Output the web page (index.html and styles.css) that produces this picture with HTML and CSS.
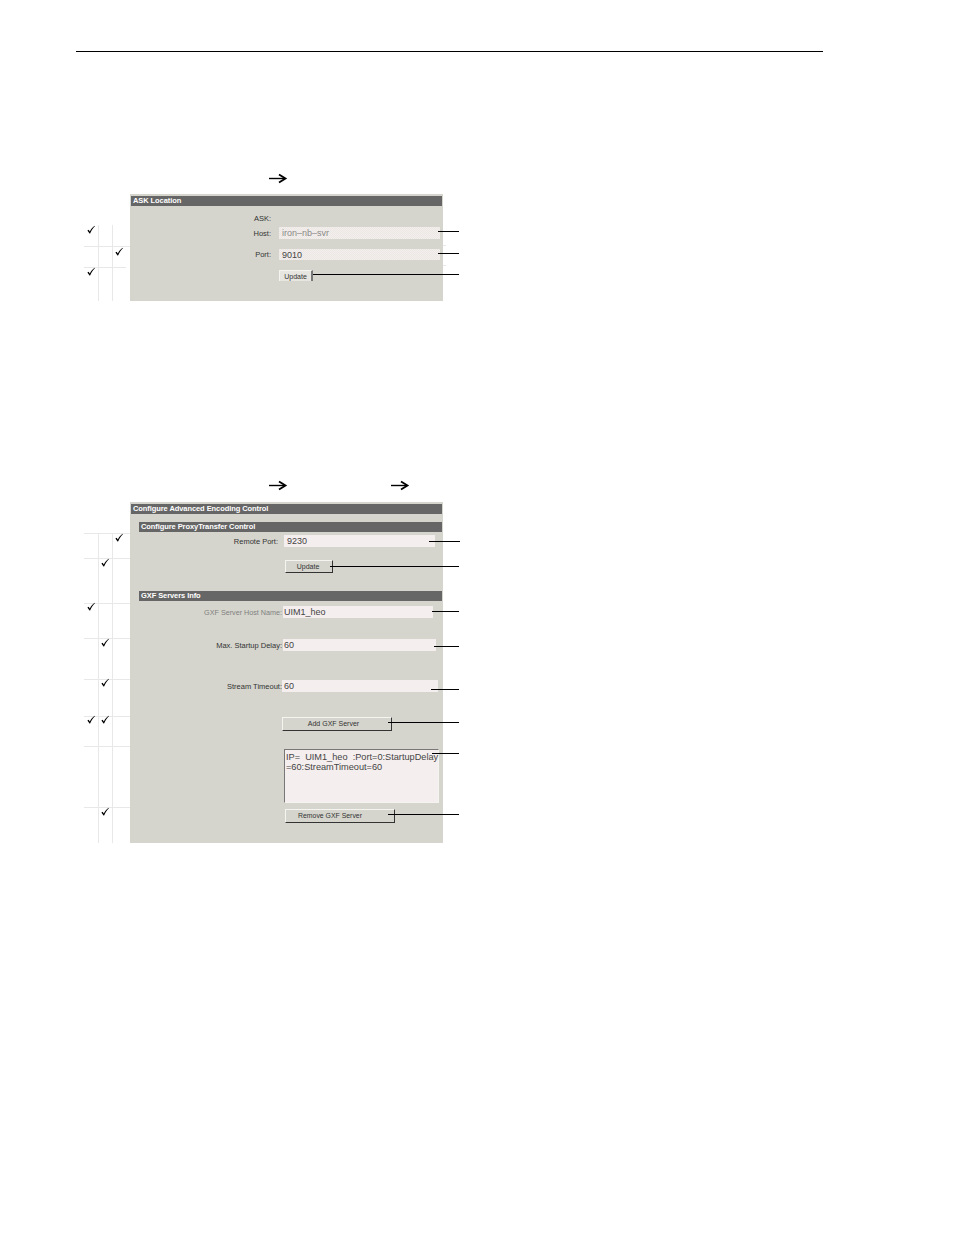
FILE: index.html
```html
<!DOCTYPE html>
<html lang="en">
<head>
    <meta charset="UTF-8">
    <title>ASK Location and Advanced Encoding Control</title>
    <link rel="stylesheet" href="styles.css">
</head>
<body>
<div class="page">
    <div class="top-rule"></div>

    <!-- ASK Location panel -->
    <div class="panel panel-ask">
        <div class="title-bar">ASK Location</div>
        <div class="row row-ask-head"><span class="label">ASK:</span></div>
        <div class="row row-host">
            <span class="label">Host:</span>
            <div class="field dither field-disabled">iron&#8211;nb&#8211;svr</div>
        </div>
        <div class="row row-port">
            <span class="label">Port:</span>
            <div class="field dither">9010</div>
        </div>
        <div class="row row-update">
            <span class="label"></span>
            <div class="btn btn-light">Update</div>
        </div>
    </div>

    <!-- Advanced Encoding panel -->
    <div class="panel panel-encoding">
        <div class="title-bar">Configure Advanced Encoding Control</div>

        <div class="sub-bar sub-proxy">Configure ProxyTransfer Control</div>
        <div class="row row-remote">
            <span class="label">Remote Port:</span>
            <div class="field">9230</div>
        </div>
        <div class="row row-proxy-update">
            <span class="label"></span>
            <div class="btn">Update</div>
        </div>

        <div class="sub-bar sub-gxf">GXF Servers Info</div>
        <div class="row row-gxf-host">
            <span class="label label-disabled">GXF Server Host Name:</span>
            <div class="field">UIM1_heo</div>
        </div>
        <div class="row row-startup">
            <span class="label">Max. Startup Delay:</span>
            <div class="field">60</div>
        </div>
        <div class="row row-timeout">
            <span class="label">Stream Timeout:</span>
            <div class="field">60</div>
        </div>
        <div class="row row-add">
            <span class="label"></span>
            <div class="btn">Add GXF Server</div>
        </div>
        <div class="row row-list">
            <span class="label"></span>
            <div class="server-list">IP=&nbsp; UIM1_heo &nbsp;:Port=0:StartupDelay<br>=60:StreamTimeout=60</div>
        </div>
        <div class="row row-remove">
            <span class="label"></span>
            <div class="btn">Remove GXF Server</div>
        </div>
    </div>

    <!-- Table rules, check marks, arrows and callout lines laid over the page -->
    <svg class="overlay" width="954" height="1235" viewBox="0 0 954 1235">
        <defs>
            <path id="check" d="M-3.6 0.4 L-2.4 -0.3 L-1.2 1.6 C0 -0.8 1.6 -2.8 3.6 -4.2 L3.9 -3.8 C2 -2 0.2 0.4 -0.9 3.6 L-1.5 3.6 Z" fill="#000"/>
            <g id="arrow" fill="none" stroke="#000">
                <path d="M0 0 H15" stroke-width="1.4"/>
                <path d="M10 -4 L16.5 0 L10 4" stroke-width="1.8"/>
            </g>
        </defs>

        <g stroke="#e8e8e8" stroke-width="1">
            <path d="M98.5 225 V301 M112.5 225 V301 M84 246.5 H130 M84 267.5 H126 M443 245.5 H446 M443 265.5 H446"/>
            <path d="M98.5 533 V843 M112.5 533 V843"/>
            <path d="M84 533.5 H130 M84 558.5 H130 M84 603.5 H130 M84 638.5 H130 M84 679.5 H130 M84 716.5 H130 M84 746.5 H130 M84 807.5 H130"/>
        </g>

        <use href="#check" x="91" y="230"/>
        <use href="#check" x="119" y="252"/>
        <use href="#check" x="91" y="272"/>
        <use href="#check" x="119" y="538"/>
        <use href="#check" x="105" y="563"/>
        <use href="#check" x="91" y="607"/>
        <use href="#check" x="105" y="643"/>
        <use href="#check" x="105" y="683"/>
        <use href="#check" x="91" y="720"/>
        <use href="#check" x="105" y="720"/>
        <use href="#check" x="105" y="812"/>

        <use href="#arrow" x="269" y="178.5"/>
        <use href="#arrow" x="269" y="485.5"/>
        <use href="#arrow" x="391" y="485.5"/>

        <g stroke="#000" stroke-width="1">
            <path d="M438 231.5 H459 M438 253.5 H459 M313 274.5 H459"/>
            <path d="M429 541.5 H460 M330 566.5 H459 M432 611.5 H459 M434 646.5 H459 M431 689.5 H459 M388 722.5 H459 M432 753.5 H459 M388 814.5 H459"/>
        </g>
    </svg>
</div>
</body>
</html>
```

FILE: styles.css
```css
/* Basic reset */
* {
    margin: 0;
    padding: 0;
    box-sizing: border-box;
}

body {
    background-color: white;
    font-family: "Liberation Sans", Arial, sans-serif;
}

.page {
    position: relative;
    width: 954px;
    height: 1235px;
    overflow: hidden;
    padding-top: 51px;
}

.top-rule {
    width: 747px;
    height: 1px;
    margin-left: 76px;
    background-color: #000;
}

.overlay {
    position: absolute;
    top: 0;
    left: 0;
}

/* Panels */
.panel {
    width: 313px;
    margin-left: 130px;
    padding: 2px 1px 0;
    background-color: #d5d5cd;
    font-size: 7.5px;
    color: #333;
}

.panel-ask {
    height: 107px;
    margin-top: 142px;
}

.panel-encoding {
    height: 341px;
    margin-top: 201px;
}

.title-bar,
.sub-bar {
    height: 10px;
    padding-left: 2px;
    background-color: #666;
    color: white;
    font-size: 7.5px;
    font-weight: bold;
    line-height: 10px;
    letter-spacing: -0.08px;
    white-space: nowrap;
}

.sub-bar {
    margin-left: 8px;
}

.sub-proxy {
    margin-top: 8px;
}

.sub-gxf {
    margin-top: 18px;
}

/* Form rows */
.row {
    display: flex;
    align-items: center;
}

.label {
    flex: none;
    width: 151px;
    text-align: right;
    white-space: nowrap;
}

.label-disabled {
    font-size: 7.2px;
    color: #808080;
}

.field {
    height: 12px;
    padding-left: 3px;
    background-color: #f5eeee;
    font-size: 9px;
    line-height: 12px;
    color: #444;
    white-space: nowrap;
}

.dither {
    background: repeating-conic-gradient(#f5eeee 0 25%, #ebe7e2 0 50%) 0 0 / 2px 2px;
}

.field-disabled {
    color: #8a8a8a;
}

.btn {
    height: 14px;
    border: 1px solid;
    border-color: #f4f4f0 #333 #333 #f4f4f0;
    background-color: #d5d5cd;
    font-size: 7px;
    line-height: 12px;
    text-align: center;
    white-space: nowrap;
}

.btn-light {
    width: 34px;
    height: 11px;
    border-width: 1px 2px 0 1px;
    border-color: #f4f4f0 #777 #d5d5cd #f4f4f0;
    background-color: #e6e5df;
    line-height: 11px;
}

.server-list {
    width: 155px;
    height: 54px;
    padding: 2px 0 0 1px;
    border: 1px solid;
    border-color: #777 #f4f4f0 #f4f4f0 #777;
    background-color: #f5eeee;
    font-size: 9.2px;
    line-height: 10px;
    color: #444;
    white-space: nowrap;
}

/* ASK panel rows */
.panel-ask .label {
    width: 140px;
}

.panel-ask .field {
    width: 161px;
    margin-left: 8px;
}

.panel-ask .btn {
    margin-left: 8px;
}

.row-ask-head {
    height: 10px;
    margin-top: 7px;
}

.row-host {
    margin-top: 4px;
}

.row-port {
    margin-top: 10px;
}

.panel-ask .row-port .field {
    height: 11px;
}

.row-update {
    margin-top: 10px;
}

/* Encoding panel rows */
.row-remote {
    margin-top: 3px;
}

.row-remote .label {
    width: 147px;
}

.row-remote .field {
    width: 151px;
    margin-left: 6px;
}

.row-proxy-update {
    margin-top: 13px;
}

.row-proxy-update .btn {
    width: 48px;
    height: 13px;
    margin-left: 3px;
    padding-right: 2px;
}

.row-gxf-host {
    margin-top: 5px;
}

.row-gxf-host .field {
    width: 150px;
    margin-left: 1px;
    padding-left: 1px;
}

.row-startup {
    margin-top: 21px;
}

.row-startup .field {
    width: 153px;
    margin-left: 1px;
    padding-left: 1px;
}

.row-timeout {
    margin-top: 29px;
}

.row-timeout .field {
    width: 156px;
    padding-left: 2px;
}

.row-add {
    margin-top: 25px;
}

.row-add .btn {
    width: 110px;
    padding-right: 7px;
}

.row-list {
    margin-top: 18px;
}

.row-list .server-list {
    margin-left: 2px;
}

.row-remove {
    margin-top: 6px;
}

.row-remove .btn {
    width: 110px;
    margin-left: 3px;
    padding-right: 20px;
    font-size: 6.9px;
}
```
